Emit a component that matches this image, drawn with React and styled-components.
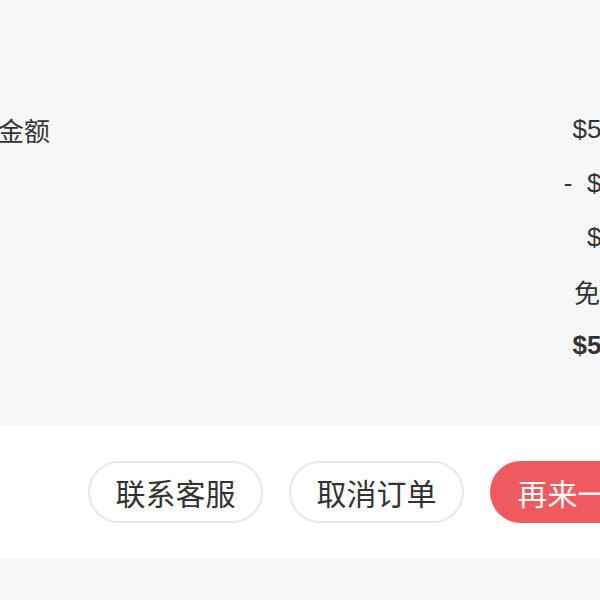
import React from 'react';
import styled, { createGlobalStyle } from 'styled-components';

const GlobalStyle = createGlobalStyle`
  html, body {
    margin: 0;
    padding: 0;
    background: #f7f7f7;
    overflow: hidden;
  }
  body {
    font-family: "Liberation Sans", "Noto Sans CJK SC", sans-serif;
  }
`;

const Page = styled.div`
  margin-left: -84px;
  width: 766px;
`;

const Summary = styled.section`
  padding: 102px 30px 54px;
  background: #f7f7f7;
`;

const Row = styled.div`
  display: flex;
  justify-content: space-between;
  align-items: center;
  height: 54px;
  font-size: 26px;
  color: #333;
  font-weight: ${({ $strong }) => ($strong ? 700 : 400)};
`;

const Label = styled.span`
  font-weight: 400;
`;

const Value = styled.span`
  text-align: right;
  white-space: pre;
`;

const Footer = styled.footer`
  display: flex;
  justify-content: flex-end;
  align-items: center;
  gap: 26px;
  height: 132px;
  padding-right: 17px;
  background: #fff;
`;

const Button = styled.button`
  box-sizing: border-box;
  width: 175px;
  height: 62px;
  border-radius: 31px;
  border: ${({ $primary }) => ($primary ? 'none' : '2px solid #e8e8e8')};
  background: ${({ $primary }) => ($primary ? '#ef5a5e' : '#fff')};
  color: ${({ $primary }) => ($primary ? '#fff' : '#333')};
  font-family: "Liberation Sans", "Noto Sans CJK SC", sans-serif;
  font-size: 30px;
  padding: 0;
  cursor: pointer;
`;

const SUMMARY = [
  { label: '商品金额', value: '$59.80' },
  { label: '优惠', value: '-  $5.00' },
  { label: '税费', value: '$3.20' },
  { label: '运费', value: '免运费' },
  { label: '合计', value: '$58.00', strong: true },
];

const App = () => (
  <>
    <GlobalStyle />
    <Page>
      <Summary>
        {SUMMARY.map(item => (
          <Row key={item.label} $strong={item.strong}>
            <Label>{item.label}</Label>
            <Value>{item.value}</Value>
          </Row>
        ))}
      </Summary>
      <Footer>
        <Button>联系客服</Button>
        <Button>取消订单</Button>
        <Button $primary>再来一单</Button>
      </Footer>
    </Page>
  </>
);

export default App;
